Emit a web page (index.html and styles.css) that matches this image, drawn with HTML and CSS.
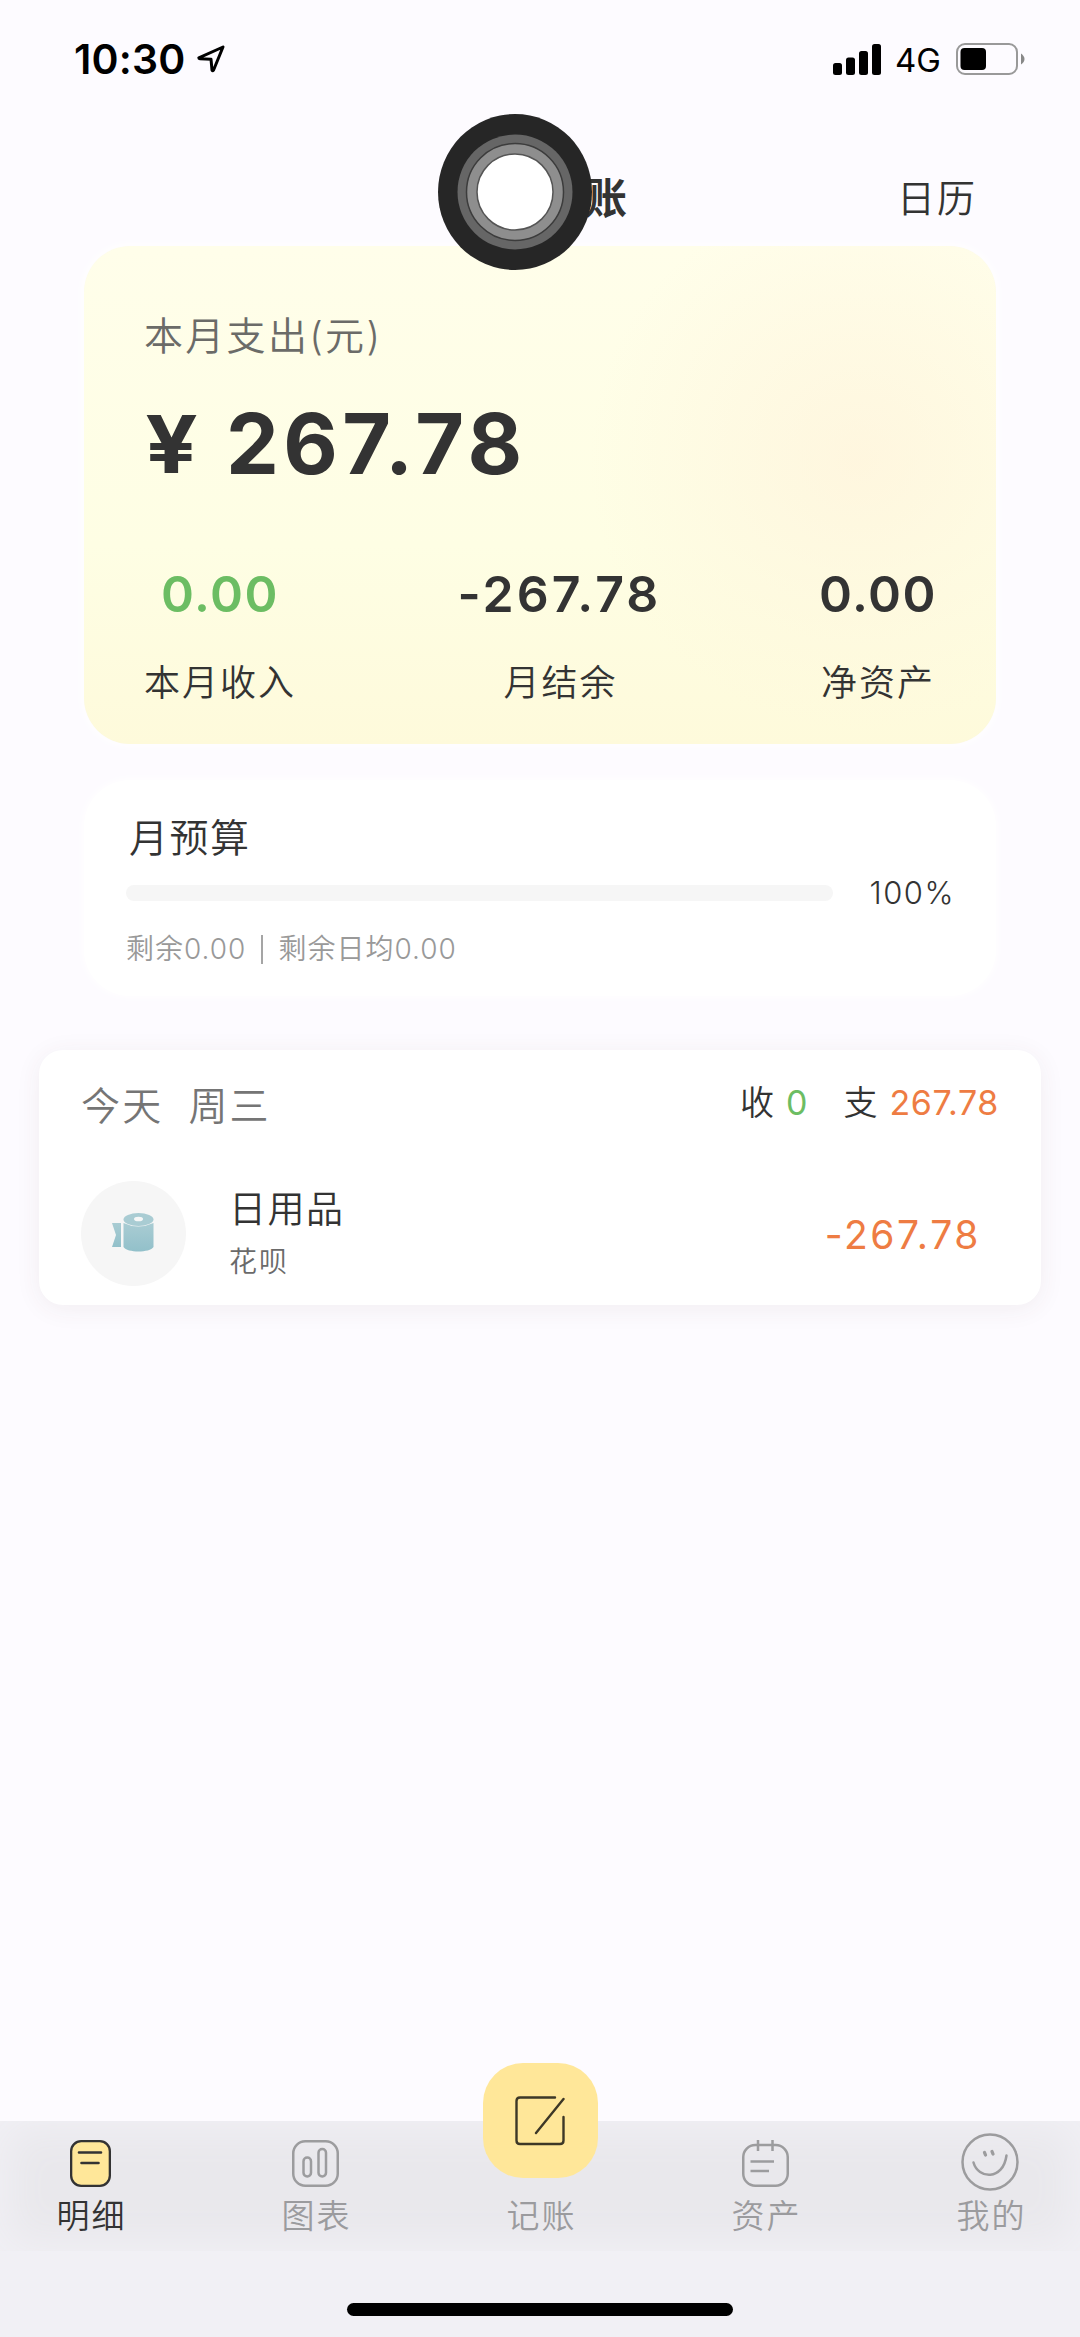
FILE: index.html
```html
<!DOCTYPE html>
<html lang="zh-CN">
<head>
<meta charset="utf-8">
<title>记账</title>
<link rel="stylesheet" href="styles.css">
</head>
<body>
<header class="status">
  <div class="status-left">
    <span class="time">10:30</span>
    <svg class="locate" viewBox="0 0 28 28" fill="none" stroke="#000" stroke-width="3" stroke-linejoin="round"><path d="M26 2 L1.8 12.8 Q1.8 13.6 3 13.8 L14 14.2 L15 25.2 Q15.8 26.4 16.6 25 Z"/></svg>
  </div>
  <div class="status-right">
    <svg class="signal" viewBox="0 0 48 31"><rect x="0" y="19" width="9" height="12" rx="2.5"/><rect x="13" y="13.5" width="9" height="17.500" rx="2.5"/><rect x="26" y="7" width="9" height="24" rx="2.5"/><rect x="39" y="0" width="9" height="31" rx="2.5"/></svg>
    <span class="network">4G</span>
    <svg class="battery" viewBox="0 0 69 32"><rect x="1" y="1" width="60" height="30" rx="8" fill="none" stroke="#999" stroke-width="2"/><rect x="4.500" y="5" width="25.500" height="22" rx="4"/><path d="M65 10.500 Q68.500 13 68.500 16 Q68.500 19 65 21.500 Z" fill="#888"/></svg>
  </div>
</header>
<nav class="nav">
  <h1 class="nav-title">账</h1>
  <span class="nav-action">日历</span>
</nav>
<svg class="touch" viewBox="0 0 154 156"><ellipse cx="77" cy="78" rx="77" ry="78" fill="#262626"/><circle cx="77" cy="78" r="57.500" fill="#666"/><circle cx="77" cy="78" r="48.500" fill="#8e8e8e" stroke="#3c3c3c" stroke-width="1.500"/><circle cx="77" cy="78" r="38" fill="#fff" stroke="#555" stroke-width="1.500"/></svg>

<main class="main">
  <section class="summary">
    <div class="summary-label">本月支出(元)</div>
    <div class="summary-amount"><span class="yen">¥</span><span>267.78</span></div>
    <div class="stats">
      <div class="stat"><span class="stat-value income">0.00</span><span class="stat-label">本月收入</span></div>
      <div class="stat"><span class="stat-value balance">-267.78</span><span class="stat-label">月结余</span></div>
      <div class="stat"><span class="stat-value">0.00</span><span class="stat-label">净资产</span></div>
    </div>
  </section>

  <section class="budget">
    <div class="budget-title">月预算</div>
    <div class="budget-row"><div class="track"></div><span class="percent">100%</span></div>
    <div class="budget-note"><span>剩余0.00</span><i class="rule"></i><span>剩余日均0.00</span></div>
  </section>

  <section class="day">
    <div class="day-head">
      <div class="day-date"><span>今天</span><span>周三</span></div>
      <div class="day-sum"><span>收</span><span class="in">0</span><span class="out-label">支</span><span class="out">267.78</span></div>
    </div>
    <div class="entry">
      <div class="entry-icon">
        <svg viewBox="0 0 42 39"><defs><linearGradient id="roll" x1="0" y1="0" x2="0" y2="1"><stop offset="0" stop-color="#a9ccd3"/><stop offset="1" stop-color="#92c0ca"/></linearGradient></defs><path d="M0 10 H9 V34 H0 L4 22 Z" fill="url(#roll)"/><path d="M11.500 10 Q26 17 41.500 10 V34 C38 40 15 40 11.500 34 Z" fill="url(#roll)"/><ellipse cx="26.500" cy="6.500" rx="15" ry="6.500" fill="#a9ccd3"/><ellipse cx="26.500" cy="6" rx="4.500" ry="2.300" fill="#f6f7f7"/></svg>
      </div>
      <div class="entry-text"><span class="entry-name">日用品</span><span class="entry-sub">花呗</span></div>
      <span class="entry-amount">-267.78</span>
    </div>
  </section>
</main>

<footer class="tabbar">
  <div class="tabs">
    <div class="tab active">
      <svg class="ic-list" viewBox="0 0 41 47" fill="none" stroke="#333" stroke-width="2.300" stroke-linecap="round"><rect x="1.150" y="1.150" width="38.700" height="44.700" rx="10" fill="#ffe799"/><path d="M9 12.500 H31 M11.500 23 H28.500" stroke-width="2.600"/></svg>
      <span>明细</span>
    </div>
    <div class="tab">
      <svg class="ic-sq" viewBox="0 0 47 47" fill="none" stroke="#9c9c9e" stroke-width="2.500"><rect x="1.250" y="1.250" width="44.500" height="44.500" rx="12"/><rect x="11.500" y="17.500" width="7.500" height="19" rx="3.700"/><rect x="26.500" y="9" width="7.500" height="27.500" rx="3.700"/></svg>
      <span>图表</span>
    </div>
    <div class="tab">
      <div class="add"><svg viewBox="0 0 50 50" fill="none" stroke="#3d3827" stroke-width="2.400" stroke-linecap="round" stroke-linejoin="round"><path d="M40 1.500 H5 Q1.500 1.500 1.500 5 V44.500 Q1.500 48 5 48 H45 Q48.500 48 48.500 44.500 V21 M48.500 3 L21 37"/></svg></div>
      <span>记账</span>
    </div>
    <div class="tab">
      <svg class="ic-sq" viewBox="0 0 47 47" fill="none" stroke="#9c9c9e" stroke-width="2.500"><rect x="1.250" y="5" width="44.500" height="40.750" rx="12"/><path d="M16 0 V11 M30.500 0 V11 M8.500 21.500 H32 M8.500 31 H27"/></svg>
      <span>资产</span>
    </div>
    <div class="tab">
      <svg class="ic-face" viewBox="0 0 58 58" fill="none" stroke="#9c9c9e" stroke-width="2.500" stroke-linecap="round"><circle cx="29" cy="29" r="27.500"/><path d="M12.500 29.500 C17 46 42 48 45.500 22.500"/><path d="M23.500 19.500 L24.500 22 M31 18.500 L32 21" stroke-width="3.300"/></svg>
      <span>我的</span>
    </div>
  </div>
  <div class="home"></div>
</footer>
</body>
</html>
```
FILE: styles.css
```css
* { box-sizing: border-box; }
body {
  margin: 0;
  width: 1080px;
  height: 2337px;
  display: flex;
  flex-direction: column;
  position: relative;
  overflow: hidden;
  background: #fdfbff;
  color: #333;
  font-family: Inter, "Noto Sans CJK SC", sans-serif;
  font-weight: 350;
}
svg { display: block; }

.status {
  height: 118px;
  padding: 0 55px 0 74px;
  display: flex;
  align-items: center;
  justify-content: space-between;
  color: #000;
}
.status-left, .status-right { display: flex; align-items: center; }
.time { font-size: 41px; font-weight: 600; line-height: 50px; letter-spacing: .2px; }
.locate { width: 28px; height: 28px; margin-left: 11px; }
.signal { width: 48px; height: 31px; }
.network { font-size: 33px; font-weight: 400; margin: 2px 15px 0 14px; }
.battery { width: 69px; height: 32px; }

.nav {
  height: 128px;
  padding: 32px 103px 0 584px;
  display: flex;
  align-items: center;
  justify-content: space-between;
}
.nav-title { margin: 0; font-size: 43px; font-weight: 700; line-height: 60px; }
.nav-action { font-size: 38px; line-height: 60px; letter-spacing: 2px; }

/* floating assistive-touch button */
.touch { position: absolute; left: 438px; top: 114px; width: 154px; height: 156px; }

.main { flex: 1; display: flex; flex-direction: column; }
.summary {
  margin: 0 84px;
  height: 498px;
  padding: 65px 59px 0 60px;
  border-radius: 46px;
  background:
    radial-gradient(circle 270px at 775px 215px, rgba(255, 241, 218, .6), rgba(255, 243, 222, 0)),
    linear-gradient(180deg, #fffeea 0%, #fefee4 60%, #fefadb 100%);
  box-shadow: 0 0 8px 3px rgba(255, 255, 255, .8);
}
.summary-label { font-size: 39px; line-height: 50px; letter-spacing: 2.3px; color: #6b6b68; }
.summary-amount {
  margin-top: 38px;
  display: flex;
  font-size: 84px;
  line-height: 90px;
  font-weight: 650;
  letter-spacing: 4.4px;
}
.yen { width: 82px; padding-left: 1px; font-size: 80px; transform: scaleX(1.15); transform-origin: left; }
.stats { margin-top: 75px; display: flex; justify-content: space-between; }
.stat { display: flex; flex-direction: column; align-items: center; gap: 34px; }
.stat-value { font-size: 50px; line-height: 60px; font-weight: 630; letter-spacing: 1.5px; }
.balance { letter-spacing: 3px; margin-right: -4px; }
.income { color: #6cbd63; }
.stat-label { font-size: 36px; line-height: 50px; letter-spacing: 2px; }
.balance + .stat-label { margin-right: -6px; }

.budget {
  margin: 36px 84px 0;
  height: 216px;
  padding: 33px 41px 0 42px;
  border-radius: 46px;
  background: #fff;
  box-shadow: 0 0 8px 2px rgba(255, 255, 255, .8);
}
.budget-title { padding-left: 3px; font-size: 39px; line-height: 50px; letter-spacing: 1.5px; }
.budget-row { margin-top: 15px; height: 30px; display: flex; align-items: center; justify-content: space-between; }
.track { width: 707px; height: 16px; border-radius: 8px; background: #f6f6f6; }
.percent { font-size: 31px; line-height: 30px; letter-spacing: 1.5px; }
.budget-note { margin-top: 26px; display: flex; align-items: center; font-size: 28px; line-height: 30px; letter-spacing: 1px; color: #999; }
.rule { width: 2px; height: 29px; margin: 0 15px; background: #a5a5a5; }

.day {
  margin: 54px 39px 0;
  height: 255px;
  padding: 28px 42px 0 42px;
  border-radius: 24px;
  background: #fff;
  box-shadow: 0 4px 26px rgba(80, 50, 60, .07);
}
.day-head { display: flex; align-items: center; justify-content: space-between; height: 50px; }
.day-date { display: flex; gap: 25px; font-size: 39px; letter-spacing: 2.2px; color: #757575; }
.day-sum { display: flex; font-size: 34px; line-height: 50px; }
.in { margin-left: 12px; font-weight: 400; color: #6cbd63; }
.out-label { margin-left: 36px; }
.out { margin-left: 12px; font-weight: 400; letter-spacing: .6px; color: #ee7c43; }
.entry { margin-top: 52px; display: flex; align-items: center; }
.entry-icon { width: 105px; height: 105px; border-radius: 50%; background: #f6f6f6; display: flex; align-items: center; justify-content: center; }
.entry-icon svg { width: 42px; height: 39px; margin: 0 2px 2px 0; }
.entry-text { flex: 1; margin: 2px 0 0 43px; display: flex; flex-direction: column; }
.entry-name { font-size: 37px; line-height: 56px; letter-spacing: 1.5px; }
.entry-sub { font-size: 28px; line-height: 48px; letter-spacing: 2px; color: #6a6a6a; }
.entry-amount { margin: 2px 18px 0 0; font-size: 39px; font-weight: 400; letter-spacing: 2.6px; color: #ee7c43; }

.tabbar {
  height: 216px;
  background: #f1f0f5;
  display: flex;
  flex-direction: column;
  align-items: center;
}
.tabs {
  width: 1080px;
  height: 130px;
  padding: 0 55px;
  display: flex;
  justify-content: space-between;
  background: #e9e8ec;
  box-shadow: inset 0 0 40px 8px #f1f0f5;
}
.tab {
  width: 70px;
  height: 115px;
  display: flex;
  flex-direction: column;
  align-items: center;
  justify-content: flex-end;
  font-size: 33px;
  line-height: 40px;
  letter-spacing: 2px;
  white-space: nowrap;
  color: #9b9b9e;
}
.tab span { margin-right: -3px; }
.active { color: #333; }
.ic-list { width: 41px; height: 47px; margin-bottom: 9px; }
.ic-sq { width: 47px; height: 47px; margin-bottom: 9px; }
.ic-face { width: 58px; height: 58px; margin-bottom: 5px; }
.add {
  width: 115px;
  height: 115px;
  flex: none;
  margin-bottom: 18px;
  border-radius: 40px;
  background: #ffe799;
  display: flex;
  align-items: center;
  justify-content: center;
}
.add svg { width: 50px; height: 50px; }
.home { margin-top: 52px; width: 386px; height: 13px; border-radius: 7px; background: #000; }
```
